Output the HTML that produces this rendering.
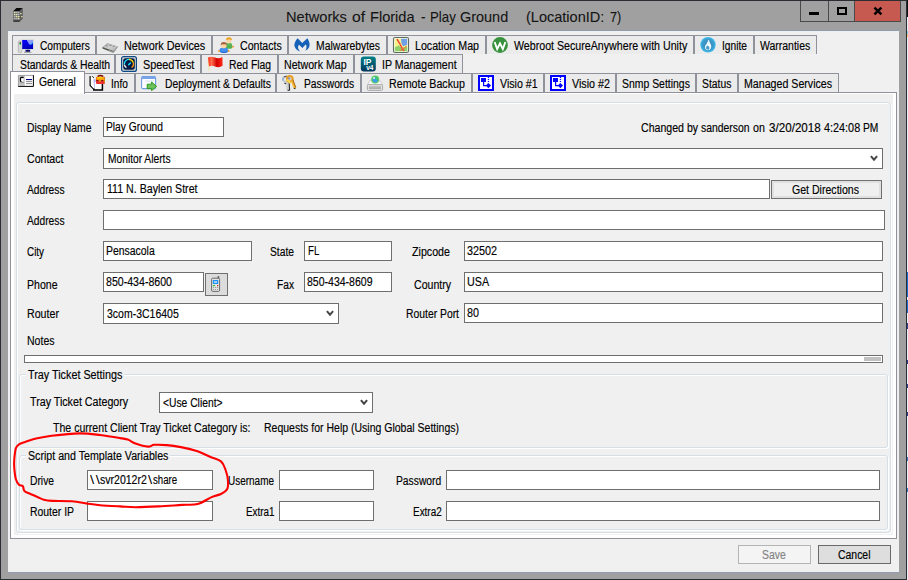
<!DOCTYPE html>
<html lang="en">
<head>
<meta charset="utf-8">
<title>Networks of Florida - Play Ground (LocationID: 7)</title>
<style>
*{box-sizing:border-box;margin:0;padding:0}
html,body{width:908px;height:580px;overflow:hidden}
body{position:relative;background:#a0a0a0;font-family:"Liberation Sans",sans-serif;font-size:12px;color:#000}
.a,.t,.lb,.tab,.in,.gb,.btn,svg.ic{position:absolute;display:block}
.t{white-space:pre;transform-origin:0 50%;color:#000;z-index:5;-webkit-text-stroke:0.15px currentColor}
.lb{z-index:4}
#content{left:8px;top:31px;width:891px;height:541px;background:#f0f0f0}
.tab{height:19px;background:#ebebeb;border:1px solid #8f919b;border-bottom:0;z-index:1}
.tab.r2,.tab.r3{}
.tab.sel{background:#fff;z-index:3;border-color:#8f919b}
#panel{left:10px;top:92px;width:887px;height:447px;border:1px solid #8f919b;background:#fff;z-index:2}
#page{left:14px;top:94px;width:879px;height:441px;background:#f0f0f0;z-index:3}
.gb{border:1px solid #d5dfe5;border-radius:3px;box-shadow:inset 1px 1px 0 #fff, 1px 1px 0 #fff;z-index:3}
.in{background:#fff;border:1px solid #6f6f6f;z-index:4}
.btn{z-index:4;border:1px solid #707070;background:#e1e1e1}
svg.ic{z-index:5;overflow:visible}
</style>
</head>
<body>
<!-- window frame -->
<div class="a" style="left:0;top:0;width:908px;height:1px;background:#2b2d33"></div>
<div class="a" style="left:0;top:0;width:1px;height:580px;background:#2b2d33"></div>
<div class="a" style="left:906px;top:0;width:1px;height:580px;background:#2b2d33"></div>
<div class="a" style="left:907px;top:0;width:1px;height:580px;background:#e8eef5"></div>
<div class="a" style="left:0;top:579px;width:907px;height:1px;background:#2b2d33"></div>
<!-- caption buttons -->
<div class="a" style="left:800px;top:1px;width:101px;height:21px;background:#4a4a4a"></div>
<div class="a" style="left:801px;top:1px;width:27px;height:20px;background:#a0a0a0"></div>
<div class="a" style="left:829px;top:1px;width:25px;height:20px;background:#a0a0a0"></div>
<div class="a" style="left:855px;top:1px;width:45px;height:20px;background:#c75a50"></div>
<div class="a" style="left:809px;top:12px;width:10px;height:3px;background:#000"></div>
<div class="a" style="left:837px;top:7px;width:10px;height:8px;border:2px solid #000"></div>
<svg class="ic" style="left:873px;top:7px" width="10" height="8" viewBox="0 0 10 8"><path d="M1.4 0.6 L8.4 7.4 M8.4 0.6 L1.4 7.4" stroke="#000" stroke-width="2.5" fill="none"/></svg>
<div class="a" style="left:907px;top:0;width:1px;height:17px;background:#111"></div>
<div class="a" style="left:907px;top:31px;width:1px;height:3px;background:#7fd6e8"></div>
<div class="a" style="left:907px;top:34px;width:1px;height:3px;background:#f0c070"></div>
<div class="a" style="left:8px;top:30px;width:891px;height:1px;background:#8f9dae"></div>
<div class="a" style="left:8px;top:572px;width:891px;height:1px;background:#8f9dae"></div>
<div class="a" style="left:907px;top:272px;width:1px;height:25px;background:#1b6fd2"></div>
<div class="a" style="left:907px;top:300px;width:1px;height:13px;background:#1b6fd2"></div>
<div class="a" style="left:907px;top:323px;width:1px;height:6px;background:#27408a"></div>
<div class="a" style="left:907px;top:360px;width:1px;height:4px;background:#27408a"></div>
<div class="a" style="left:907px;top:384px;width:1px;height:4px;background:#27408a"></div>
<div class="a" style="left:907px;top:412px;width:1px;height:4px;background:#27408a"></div>
<div class="a" style="left:907px;top:457px;width:1px;height:4px;background:#3a78c8"></div>
<div class="a" style="left:907px;top:488px;width:1px;height:4px;background:#3a78c8"></div>
<div class="a" id="content"></div>
<!-- tabs row 1 -->
<div class="tab" style="left:12px;top:35px;width:84px"></div>
<div class="tab" style="left:96px;top:35px;width:116px"></div>
<div class="tab" style="left:212px;top:35px;width:76px"></div>
<div class="tab" style="left:288px;top:35px;width:99px"></div>
<div class="tab" style="left:387px;top:35px;width:99px"></div>
<div class="tab" style="left:486px;top:35px;width:208px"></div>
<div class="tab" style="left:694px;top:35px;width:60px"></div>
<div class="tab" style="left:754px;top:35px;width:63px"></div>
<!-- tabs row 2 -->
<div class="tab r2" style="left:12px;top:54px;width:103px"></div>
<div class="tab r2" style="left:115px;top:54px;width:86px"></div>
<div class="tab r2" style="left:201px;top:54px;width:77px"></div>
<div class="tab r2" style="left:278px;top:54px;width:76px"></div>
<div class="tab r2" style="left:354px;top:54px;width:109px"></div>
<!-- tabs row 3 -->
<div class="tab r3" style="left:83px;top:73px;width:52px"></div>
<div class="tab r3" style="left:135px;top:73px;width:141px"></div>
<div class="tab r3" style="left:276px;top:73px;width:85px"></div>
<div class="tab r3" style="left:361px;top:73px;width:111px"></div>
<div class="tab r3" style="left:472px;top:73px;width:72px"></div>
<div class="tab r3" style="left:544px;top:73px;width:72px"></div>
<div class="tab r3" style="left:616px;top:73px;width:80px"></div>
<div class="tab r3" style="left:696px;top:73px;width:42px"></div>
<div class="tab r3" style="left:738px;top:73px;width:101px"></div>
<div class="a" id="panel"></div>
<div class="tab sel" style="left:10px;top:71px;width:75px;height:23px"></div>
<div class="a" id="page"></div>
<!-- group boxes -->
<div class="gb" style="left:16px;top:102px;width:875px;height:431px"></div>
<div class="gb" style="left:19px;top:374px;width:869px;height:74px"></div>
<div class="gb" style="left:19px;top:455px;width:869px;height:75px"></div>
<!-- inputs -->
<div class="in" style="left:103px;top:117px;width:121px;height:20px"></div>
<div class="in" style="left:103px;top:148px;width:780px;height:21px"></div>
<div class="in" style="left:103px;top:179px;width:667px;height:20px"></div>
<div class="btn" style="left:771px;top:180px;width:111px;height:19px;background:#efefef;box-shadow:inset 0 0 0 2px #e0e0e0"></div>
<div class="in" style="left:103px;top:210px;width:782px;height:20px"></div>
<div class="in" style="left:103px;top:241px;width:149px;height:20px"></div>
<div class="in" style="left:304px;top:241px;width:88px;height:20px"></div>
<div class="in" style="left:464px;top:241px;width:419px;height:20px"></div>
<div class="in" style="left:103px;top:272px;width:101px;height:20px"></div>
<div class="btn" style="left:205px;top:273px;width:23px;height:23px;background:#dcdcdc"></div>
<div class="in" style="left:304px;top:272px;width:88px;height:20px"></div>
<div class="in" style="left:464px;top:272px;width:419px;height:20px"></div>
<div class="in" style="left:103px;top:303px;width:236px;height:21px"></div>
<div class="in" style="left:464px;top:303px;width:419px;height:20px"></div>
<div class="in" style="left:24px;top:355px;width:859px;height:8px"></div>
<div class="a" style="left:864px;top:357px;width:17px;height:4px;background:#c1c1c1;z-index:5"></div>
<div class="in" style="left:159px;top:392px;width:214px;height:21px"></div>
<div class="in" style="left:87px;top:470px;width:126px;height:20px"></div>
<div class="in" style="left:279px;top:470px;width:95px;height:20px"></div>
<div class="in" style="left:446px;top:470px;width:434px;height:20px"></div>
<div class="in" style="left:87px;top:501px;width:126px;height:20px"></div>
<div class="in" style="left:279px;top:501px;width:95px;height:20px"></div>
<div class="in" style="left:446px;top:501px;width:434px;height:20px"></div>
<!-- combo arrows -->
<svg class="ic" style="left:870.2px;top:155.4px" width="8" height="7" viewBox="0 0 8 7"><path d="M0.9 1.2 L4 4.7 L7.1 1.2" stroke="#454545" stroke-width="2" fill="none"/></svg>
<svg class="ic" style="left:326.2px;top:310.4px" width="8" height="7" viewBox="0 0 8 7"><path d="M0.9 1.2 L4 4.7 L7.1 1.2" stroke="#454545" stroke-width="2" fill="none"/></svg>
<svg class="ic" style="left:360.2px;top:399.4px" width="8" height="7" viewBox="0 0 8 7"><path d="M0.9 1.2 L4 4.7 L7.1 1.2" stroke="#454545" stroke-width="2" fill="none"/></svg>
<!-- bottom buttons -->
<div class="btn" style="left:738px;top:545px;width:73px;height:19px;background:#f4f4f4;border-color:#b4b4b4"></div>
<div class="btn" style="left:818px;top:545px;width:73px;height:19px;background:#dedede;border-color:#6a6a6a"></div>
<svg class="ic" style="left:12px;top:7px" width="12" height="16" viewBox="0 0 12 16">
<polygon points="1.5,4 4.5,1 10.5,1 10.5,11.5 7.5,14.8 1.5,14.8" fill="#4a4a4a"/>
<polygon points="1.5,4 4.5,1 10.5,1 7.5,4" fill="#0b0b0b"/>
<polygon points="7.5,4 10.5,1 10.5,11.5 7.5,14.8" fill="#5e5e5e"/>
<rect x="1.5" y="4" width="6" height="10.8" fill="#777"/>
<g fill="#ffffb0"><rect x="2.2" y="5" width="1.2" height="1.2"/><rect x="2.2" y="7" width="1.2" height="1.2"/><rect x="4.2" y="7" width="1.2" height="1.2"/><rect x="4.2" y="9" width="1.2" height="1.2"/><rect x="6.2" y="9" width="1.2" height="1.2"/><rect x="6.2" y="11" width="1.2" height="1.2"/><rect x="8.3" y="6" width="1.2" height="1.2"/><rect x="9.3" y="9" width="1.2" height="1.2"/></g>
<g fill="#c8c8c8"><rect x="4.2" y="5" width="1.2" height="1.2"/><rect x="6.2" y="5" width="1.2" height="1.2"/><rect x="6.2" y="7" width="1.2" height="1.2"/><rect x="2.2" y="9" width="1.2" height="1.2"/><rect x="2.2" y="11" width="1.2" height="1.2"/><rect x="4.2" y="11" width="1.2" height="1.2"/></g>
<rect x="1.5" y="13.3" width="6" height="1.5" fill="#333"/>
</svg>
<svg class="ic" style="left:18px;top:37px" width="16" height="16" viewBox="0 0 16 16">
<defs><linearGradient id="gcm" x1="0" y1="0" x2="0" y2="1"><stop offset="0" stop-color="#0000ff"/><stop offset="1" stop-color="#0000b4"/></linearGradient></defs>
<rect x="0.3" y="3.8" width="3.4" height="11.8" rx="1" fill="#d9d9d9" stroke="#a9a9a9" stroke-width=".7"/>
<rect x="1.6" y="5.3" width="1.4" height="1.5" fill="#111"/><rect x="1.6" y="6.6" width="1.4" height="1.4" fill="#18e038"/>
<rect x="3.6" y="2.2" width="12" height="10.4" fill="#e8e8e8" stroke="#d0d4d8" stroke-width=".6"/>
<rect x="4.2" y="3" width="10.8" height="9" fill="url(#gcm)"/>
<polygon points="9,3 15,3 15,5.5 13,7.6 11.6,7.6 10.2,6 10.2,4.6 9,4.6" fill="#8f9cf6"/>
<polygon points="12,7.6 14.2,5.2 15,5.2 15,6 13,7.8" fill="#25b4f0"/>
<rect x="7.5" y="12.8" width="4.6" height="2" fill="#00008c"/><rect x="9.2" y="12.8" width="1.2" height="2" fill="#1a1a1a"/>
<rect x="6" y="14.8" width="7.4" height="1" fill="#9a9a9a"/>
</svg>
<svg class="ic" style="left:102px;top:37px" width="16" height="16" viewBox="0 0 16 16">
<defs><linearGradient id="gnd" x1="0" y1="0" x2="1" y2="1"><stop offset="0" stop-color="#a4a4a4"/><stop offset=".5" stop-color="#cfcfcf"/><stop offset="1" stop-color="#b0b0b0"/></linearGradient></defs>
<polygon points="0.4,10.4 5.4,6.2 15.8,9.6 12,15.2 10,15.6 0.6,11.4" fill="#8a8a8a"/>
<polygon points="0.6,10 5.4,6.2 15.6,9.4 11.4,14" fill="url(#gnd)"/>
<polygon points="0.6,10.2 11.4,14.2 11.4,15.4 0.6,11.4" fill="#55584f"/>
<polygon points="6.6,13 10.8,14.4 10.8,15.2 6.6,13.8" fill="#a9b8a4"/>
<polygon points="11.4,14.2 15.6,9.4 15.6,10.6 11.6,15.4" fill="#9a9a9a"/>
<rect x="4.4" y="7.8" width="1.6" height=".9" fill="#808080" transform="rotate(18 4 7)"/><rect x="8" y="7.6" width="2" height=".9" fill="#808080" transform="rotate(18 8 7)"/><rect x="11" y="8.6" width="2" height=".9" fill="#808080" transform="rotate(18 11 8)"/>
</svg>
<svg class="ic" style="left:218px;top:37px" width="16" height="16" viewBox="0 0 16 16">
<ellipse cx="10.6" cy="8.6" rx="3.6" ry="3.2" fill="#5cb85c"/><rect x="7.4" y="8" width="6.6" height="3.6" rx="1.2" fill="#55b055"/>
<circle cx="15" cy="9.8" r="1" fill="#f09a30"/>
<circle cx="10.8" cy="3.8" r="2.6" fill="#fbd5a5"/>
<path d="M7.8 3.6 Q8 0.2 10.9 0.3 Q13.9 0.3 14 3.6 Q12.6 2 10.9 2.6 Q9 2 7.8 3.6Z" fill="#eba21a"/>
<path d="M1.4 13 Q2 10.6 5.6 10.6 Q9.6 10.6 10.2 13 L10 15 Q6 16.6 1.8 15Z" fill="#3f8fee"/>
<path d="M2.4 14.2 Q6 15.8 9.6 14.2 L9.4 15.2 Q6 16.6 2.4 15.2Z" fill="#2560d8"/>
<circle cx="1" cy="14" r="1" fill="#f09a30"/><circle cx="10.6" cy="14" r="1" fill="#f09a30"/>
<circle cx="5.8" cy="8.4" r="2.8" fill="#fbd5a5"/>
<path d="M2.6 8.4 Q2.6 5 5.8 5 Q9 5 9 8.4 Q7.6 6.8 5.8 7.4 Q4 6.8 2.6 8.4Z" fill="#a8623a"/>
</svg>
<svg class="ic" style="left:294px;top:37px" width="16" height="16" viewBox="0 0 16 16">
<path d="M3.6 1.2 L8.2 6 L13.4 1.2 Q16.4 5.6 15.2 10 Q14.2 12.6 11.4 13.8 Q13 11.6 12.4 8.6 L11.6 7.6 L8.4 11 L5 7.8 Q3.6 9.2 4.2 11.4 Q4.8 13.2 6.4 14.4 Q2 13.6 0.6 9.6 Q-0.4 5.4 3.6 1.2Z" fill="#1560b8"/>
</svg>
<svg class="ic" style="left:393px;top:37px" width="16" height="16" viewBox="0 0 16 16">
<rect x="0.5" y="0.5" width="15" height="15" rx="1.6" fill="#fafff5" stroke="#5f6b5f" stroke-width="1.1"/>
<rect x="1.8" y="1.8" width="12.4" height="12.4" fill="#f6f28a"/>
<polygon points="8,1.8 14.2,1.8 14.2,8 10,9.2 8.4,6" fill="#6f9fe6"/>
<polygon points="1.8,10.2 5.6,8.6 9,11 14.2,9.6 14.2,14.2 1.8,14.2" fill="#8fd06a"/>
<path d="M4 2 L7 7 L9.6 12 L11 14" stroke="#f0483c" stroke-width="1.5" fill="none"/>
<path d="M7 13.6 L10 11.6 L13.6 9.4" stroke="#f07830" stroke-width="1.1" fill="none"/>
</svg>
<svg class="ic" style="left:492px;top:37px" width="16" height="16" viewBox="0 0 16 16">
<circle cx="8" cy="8" r="7.9" fill="#38913d"/>
<path d="M2.6 5 L5.2 12 L8 6.4 L10.8 12 L13.4 5" stroke="#fff" stroke-width="1.9" fill="none" stroke-linejoin="miter"/>
</svg>
<svg class="ic" style="left:700px;top:37px" width="16" height="16" viewBox="0 0 16 16">
<defs><radialGradient id="gig" cx=".5" cy=".5" r=".5"><stop offset="0" stop-color="#3a8cb8"/><stop offset=".7" stop-color="#3b98c8"/><stop offset="1" stop-color="#3cc0f0"/></radialGradient></defs>
<circle cx="8" cy="7.8" r="7.7" fill="url(#gig)"/>
<path d="M8.6 2.6 C9.8 4.4 9.4 5.6 10.2 6.6 C11.4 8 11.4 9.6 11 10.8 C10.4 12.6 9.2 13.3 8 13.3 C6.2 13.3 5 12 5 10.2 C5 8.4 6.2 7.4 6.9 6.2 C7.6 5 8 4 8.6 2.6Z" fill="#eefaff"/>
<path d="M7.3 8.4 C8.6 8.8 9.6 9.8 9.4 11.2 C9.2 12.3 8.5 12.7 7.8 12.7 C6.7 12.7 6 11.9 6 10.8 C6 9.7 6.7 9 7.3 8.4Z" fill="#4a9ccc"/>
</svg>
<svg class="ic" style="left:121px;top:56px" width="16" height="16" viewBox="0 0 16 16">
<rect x="0.6" y="0.6" width="14.8" height="14.8" rx="2" fill="#d4d6d2" stroke="#0c4884" stroke-width="1.2"/>
<rect x="2.2" y="2.2" width="11.6" height="11.6" rx="2.4" fill="#041a44"/>
<path d="M5.4 11.6 A4.6 4.6 0 0 1 3.4 8.6" stroke="#ffffff" stroke-width="1.3" fill="none"/>
<path d="M3.4 8.4 A4.6 4.6 0 0 1 8 3.4" stroke="#1fe0ff" stroke-width="1.3" fill="none"/>
<path d="M8 3.4 A4.6 4.6 0 0 1 12.2 6.4" stroke="#ffe000" stroke-width="1.3" fill="none"/>
<path d="M12.2 6.4 A4.6 4.6 0 0 1 10.6 11.6" stroke="#ff9a10" stroke-width="1.3" fill="none"/>
<path d="M7.6 8.8 L9.4 7" stroke="#10e8ff" stroke-width="1.3" stroke-linecap="round"/>
</svg>
<svg class="ic" style="left:207px;top:56px" width="16" height="16" viewBox="0 0 16 16">
<defs><linearGradient id="gfl" x1="0" y1="0" x2="1" y2="0"><stop offset="0" stop-color="#ff2a1a"/><stop offset=".25" stop-color="#ff7050"/><stop offset=".6" stop-color="#d40000"/><stop offset="1" stop-color="#ff2a1a"/></linearGradient></defs>
<path d="M0.6 1.4 L1.6 1.4 L2.6 15.6 L1.8 15.6Z" fill="#f0e2a0"/>
<path d="M1 1.6 Q4 -0.2 8 1.6 Q11.6 3 15.4 1 L15.6 9.8 Q12 12.2 8 10.4 Q4.6 8.8 2 10.6Z" fill="url(#gfl)"/>
</svg>
<svg class="ic" style="left:360px;top:56px" width="16" height="16" viewBox="0 0 16 16">
<defs><linearGradient id="gip" x1="0" y1="0" x2="0" y2="1"><stop offset="0" stop-color="#008289"/><stop offset="1" stop-color="#00345a"/></linearGradient></defs>
<rect x="0.8" y="0.6" width="15" height="15" rx="3" fill="url(#gip)"/>
<text x="3.4" y="8.6" font-family="Liberation Sans,sans-serif" font-weight="bold" font-size="8.4" fill="#fff">IP</text>
<text x="6.2" y="14" font-family="Liberation Sans,sans-serif" font-weight="bold" font-size="6.6" fill="#fff">v4</text>
</svg>
<svg class="ic" style="left:18px;top:73px" width="16" height="16" viewBox="0 0 16 16">
<rect x="0.4" y="2.2" width="15.2" height="11.4" fill="#fff"/>
<rect x="0.4" y="2.2" width="6.4" height="10.6" fill="#c4c4c4"/>
<path d="M0.4 13.4 L0.4 2.4 L15.6 2.4" stroke="#9a9a9a" stroke-width=".9" fill="none"/>
<path d="M0.2 13.4 L15.4 13.4 L15.4 2.2" stroke="#000" stroke-width="1" fill="none"/>
<path d="M5.6 4.4 L3.4 4.4 Q2.4 4.4 2.4 5.6 L2.4 7.4 Q2.4 8.6 3.6 8.8" stroke="#000" stroke-width="1.1" fill="none"/>
<rect x="3.4" y="5.4" width="2" height="3" fill="#fff"/>
<rect x="2.4" y="9.2" width="3.6" height="0.9" fill="#8a8a8a"/>
<rect x="8" y="6" width="6" height="1.1" fill="#00008a"/>
<rect x="8" y="8.2" width="6" height=".9" fill="#7d7d7d"/>
<rect x="8" y="10.2" width="6" height=".9" fill="#7d7d7d"/>
</svg>
<svg class="ic" style="left:89px;top:75px" width="16" height="16" viewBox="0 0 16 16">
<path d="M1.1 1 L1.1 10.4 L5 14.4" stroke="#000" stroke-width="1.15" fill="none"/>
<path d="M3.4 1.4 L4.8 2.8" stroke="#000" stroke-width="1" fill="none"/>
<polygon points="2.2,1.6 5,4.6 5,14 2.2,10.4" fill="#fff"/>
<polygon points="4.4,4.2 6.6,4.2 6.6,13.6 5.2,13.6" fill="#b4b4f0"/>
<rect x="5.8" y="7" width="7.2" height="7.6" fill="#fff"/>
<path d="M4.8 13.4 L4.8 15 L13.4 15 L13.4 8.4" stroke="#000" stroke-width="1.5" fill="none"/>
<rect x="7" y="1.8" width="9" height="7.2" rx="1" fill="#ee3030"/>
<rect x="7.4" y="2" width="7.6" height="3.6" fill="#ff9a10"/>
<rect x="8" y="2" width="5.4" height="1.6" fill="#ffd000"/>
<path d="M8.6 1.4 Q11.4 -0.4 14.2 1.4" stroke="#7a0c04" stroke-width="1.5" fill="none"/>
<rect x="15" y="2.4" width="1" height="5.4" fill="#d08a18"/>
<rect x="7.4" y="5.2" width="2" height=".9" fill="#400"/><rect x="12.2" y="5.2" width="2" height=".9" fill="#400"/>
<rect x="10.2" y="5.2" width="1.4" height="1.8" fill="#e8a020"/>
</svg>
<svg class="ic" style="left:141px;top:75px" width="16" height="16" viewBox="0 0 16 16">
<rect x="0.6" y="1.6" width="14" height="12" rx="1.4" fill="#fdfdff" stroke="#6f9be0" stroke-width="1.1"/>
<rect x="0.6" y="1.6" width="14" height="2.4" rx="1" fill="#78a4e8"/>
<rect x="4" y="5.2" width="8.4" height="2" fill="#e4ecfa"/>
<polygon points="6.2,9.2 10.6,9.2 10.6,7 15.6,11.4 10.6,15.6 10.6,13.6 6.2,13.6" fill="#6fbf5a" stroke="#2f9a22" stroke-width="1"/>
</svg>
<svg class="ic" style="left:282px;top:75px" width="16" height="16" viewBox="0 0 16 16">
<circle cx="3.8" cy="4.2" r="2.7" fill="none" stroke="#c4c8cc" stroke-width="1.9"/>
<path d="M1.8 2 Q4.6 0.6 6.8 2.2" stroke="#4a4a4a" stroke-width="1" fill="none"/>
<path d="M1.2 2.8 Q0.4 4 1 5.4" stroke="#7aa8d8" stroke-width="1.2" fill="none"/>
<polygon points="4.4,7.2 7,7.2 7.6,15 5.6,15.4 4.2,14.4" fill="#d0d0d0"/>
<path d="M7.2 8 L7.6 15 L5.6 15.4" stroke="#2a2a2a" stroke-width="1.1" fill="none"/>
<path d="M2.4 8.2 L4.2 8.8" stroke="#333" stroke-width="1.1"/>
<circle cx="7.8" cy="3.8" r="2.8" fill="none" stroke="#e8a028" stroke-width="2.2"/>
<circle cx="7.4" cy="3.4" r="1.2" fill="#8a98b8"/>
<path d="M4.4 4.6 L7 6.2 L8.2 8.4" stroke="#ffd84a" stroke-width="1.7" fill="none"/>
<polygon points="8.6,5.6 11,4.6 14,12.6 13.4,13.8 11.6,13" fill="#eaa42c"/>
<path d="M9.4 6 L12.2 12.6" stroke="#f8c848" stroke-width=".9" fill="none"/>
<path d="M10.8 4.6 L13.8 12.4" stroke="#b06c10" stroke-width="1" fill="none"/>
<path d="M11.8 13.2 L13.4 13.8" stroke="#333" stroke-width="1.2"/>
</svg>
<svg class="ic" style="left:367px;top:75px" width="16" height="16" viewBox="0 0 16 16">
<defs><linearGradient id="grb" x1="0" y1="0" x2="0" y2="1"><stop offset="0" stop-color="#c6c6c6"/><stop offset="1" stop-color="#a8a8a8"/></linearGradient></defs>
<polygon points="2.8,5.6 13.2,5.6 15.6,10 0.4,10" fill="#f6f6f6" stroke="#c4c4c4" stroke-width=".8"/>
<rect x="0.4" y="9.6" width="15.2" height="5.8" rx="1.2" fill="#ececec" stroke="#9a9a9a" stroke-width=".8"/>
<rect x="1.8" y="10.6" width="12.4" height="3.6" fill="url(#grb)"/>
<circle cx="8.2" cy="4.4" r="4" fill="#5ad05a"/>
<circle cx="8.2" cy="4.6" r="2.8" fill="#3f9cf0"/>
<path d="M8.6 2 Q11.4 2.4 10.6 5 L9 4.6 L8.4 3.4Z" fill="#38d060"/>
<circle cx="7" cy="3" r="1.1" fill="#d8f4d0"/>
</svg>
<svg class="ic" style="left:478px;top:75px" width="16" height="16" viewBox="0 0 16 16">
<rect x="0" y="0" width="16" height="16" fill="#0000ff"/>
<rect x="2" y="2" width="12" height="12" fill="#fff"/>
<rect x="3" y="3" width="5" height="4" fill="#0000ff"/>
<path d="M5.6 7 L5.6 10.6 L10 10.6" stroke="#0000ff" stroke-width="1.2" fill="none"/>
<polygon points="10.4,8 13,10.6 10.4,13.2 7.9,10.6" fill="#0000ff"/>
<rect x="9.8" y="2" width="1.3" height="1.1" fill="#0000ff"/><rect x="9.8" y="4" width="1.3" height="1.1" fill="#0000ff"/><rect x="9.8" y="6" width="1.3" height="1.1" fill="#0000ff"/>
</svg>
<svg class="ic" style="left:550px;top:75px" width="16" height="16" viewBox="0 0 16 16">
<rect x="0" y="0" width="16" height="16" fill="#0000ff"/>
<rect x="2" y="2" width="12" height="12" fill="#fff"/>
<rect x="3" y="3" width="5" height="4" fill="#0000ff"/>
<path d="M5.6 7 L5.6 10.6 L10 10.6" stroke="#0000ff" stroke-width="1.2" fill="none"/>
<polygon points="10.4,8 13,10.6 10.4,13.2 7.9,10.6" fill="#0000ff"/>
<rect x="9.8" y="2" width="1.3" height="1.1" fill="#0000ff"/><rect x="9.8" y="4" width="1.3" height="1.1" fill="#0000ff"/><rect x="9.8" y="6" width="1.3" height="1.1" fill="#0000ff"/>
</svg>
<svg class="ic" style="left:211px;top:276px" width="10" height="16" viewBox="0 0 10 16">
<rect x="6.6" y="0.2" width="1.6" height="4" fill="#555"/>
<rect x="0.6" y="2.2" width="8" height="13.2" rx="1.2" fill="#e4e4e4" stroke="#6a6a6a" stroke-width="1"/>
<rect x="1.8" y="4" width="5.4" height="4" rx=".6" fill="#1e90ff"/>
<rect x="3" y="5.2" width="3" height="1.6" fill="#bfe2ff"/>
<rect x="1.8" y="9" width="2.4" height="1.2" fill="#40c040"/><rect x="6" y="9" width="1.3" height="1.2" fill="#e03030"/>
<g fill="#9a9a9a"><rect x="2" y="11" width="1.1" height="1"/><rect x="4" y="11" width="1.1" height="1"/><rect x="6" y="11" width="1.1" height="1"/><rect x="2" y="13" width="1.1" height="1"/><rect x="4" y="13" width="1.1" height="1"/><rect x="6" y="13" width="1.1" height="1"/></g>
</svg>
<div class="g"><span class="t" style="left:285.60px;top:6.50px;font-size:15px;line-height:19px;transform:scaleX(0.9742);color:#141414;-webkit-text-stroke:0.1px currentColor">Networks </span><span class="t" style="left:351.80px;top:6.50px;font-size:15px;line-height:19px;transform:scaleX(1.0467);color:#141414;-webkit-text-stroke:0.1px currentColor">of </span><span class="t" style="left:369.70px;top:6.50px;font-size:15px;line-height:19px;transform:scaleX(0.9725);color:#141414;-webkit-text-stroke:0.1px currentColor">Florida </span><span class="t" style="left:421.30px;top:6.50px;font-size:15px;line-height:19px;transform:scaleX(0.9000);color:#141414;-webkit-text-stroke:0.1px currentColor">- </span><span class="t" style="left:429.80px;top:6.50px;font-size:15px;line-height:19px;transform:scaleX(0.8839);color:#141414;-webkit-text-stroke:0.1px currentColor">Play </span><span class="t" style="left:460.30px;top:6.50px;font-size:15px;line-height:19px;transform:scaleX(0.9631);color:#141414;-webkit-text-stroke:0.1px currentColor">Ground    </span><span class="t" style="left:526.30px;top:6.50px;font-size:15px;line-height:19px;transform:scaleX(0.9682);color:#141414;-webkit-text-stroke:0.1px currentColor">(LocationID: </span><span class="t" style="left:609.60px;top:6.50px;font-size:15px;line-height:19px;transform:scaleX(0.8468);color:#141414;-webkit-text-stroke:0.1px currentColor">7)</span></div>
<span class="t" style="left:39.50px;top:38.00px;font-size:12px;line-height:16px;transform:scaleX(0.8477)">Computers</span>
<span class="t" style="left:124.25px;top:38.00px;font-size:12px;line-height:16px;transform:scaleX(0.9025)">Network Devices</span>
<span class="t" style="left:239.50px;top:38.00px;font-size:12px;line-height:16px;transform:scaleX(0.8816)">Contacts</span>
<span class="t" style="left:316.25px;top:38.00px;font-size:12px;line-height:16px;transform:scaleX(0.8645)">Malwarebytes</span>
<span class="t" style="left:415.00px;top:38.00px;font-size:12px;line-height:16px;transform:scaleX(0.8883)">Location Map</span>
<span class="t" style="left:514.00px;top:38.00px;font-size:12px;line-height:16px;transform:scaleX(0.8875)">Webroot SecureAnywhere with Unity</span>
<span class="t" style="left:722.25px;top:38.00px;font-size:12px;line-height:16px;transform:scaleX(0.8515)">Ignite</span>
<span class="t" style="left:760.25px;top:38.00px;font-size:12px;line-height:16px;transform:scaleX(0.8727)">Warranties</span>
<span class="t" style="left:19.80px;top:56.50px;font-size:12px;line-height:16px;transform:scaleX(0.8658)">Standards &amp; Health</span>
<span class="t" style="left:142.80px;top:56.50px;font-size:12px;line-height:16px;transform:scaleX(0.9053)">SpeedTest</span>
<span class="t" style="left:229.30px;top:56.50px;font-size:12px;line-height:16px;transform:scaleX(0.8644)">Red Flag</span>
<span class="t" style="left:284.30px;top:56.50px;font-size:12px;line-height:16px;transform:scaleX(0.8856)">Network Map</span>
<span class="t" style="left:381.80px;top:56.50px;font-size:12px;line-height:16px;transform:scaleX(0.8828)">IP Management</span>
<span class="t" style="left:39.30px;top:73.50px;font-size:12px;line-height:16px;transform:scaleX(0.8629)">General</span>
<span class="t" style="left:111.05px;top:75.50px;font-size:12px;line-height:16px;transform:scaleX(0.8418)">Info</span>
<span class="t" style="left:165.30px;top:75.50px;font-size:12px;line-height:16px;transform:scaleX(0.8624)">Deployment &amp; Defaults</span>
<span class="t" style="left:304.30px;top:75.50px;font-size:12px;line-height:16px;transform:scaleX(0.8537)">Passwords</span>
<span class="t" style="left:389.30px;top:75.50px;font-size:12px;line-height:16px;transform:scaleX(0.8883)">Remote Backup</span>
<span class="t" style="left:499.55px;top:75.50px;font-size:12px;line-height:16px;transform:scaleX(0.8850)">Visio #1</span>
<span class="t" style="left:571.80px;top:75.50px;font-size:12px;line-height:16px;transform:scaleX(0.8909)">Visio #2</span>
<span class="t" style="left:621.80px;top:75.50px;font-size:12px;line-height:16px;transform:scaleX(0.8693)">Snmp Settings</span>
<span class="t" style="left:702.05px;top:75.50px;font-size:12px;line-height:16px;transform:scaleX(0.8624)">Status</span>
<span class="t" style="left:744.05px;top:75.50px;font-size:12px;line-height:16px;transform:scaleX(0.8864)">Managed Services</span>
<span class="t" style="left:27.00px;top:119.50px;font-size:12px;line-height:16px;transform:scaleX(0.8634)">Display Name</span>
<span class="t" style="left:26.50px;top:151.00px;font-size:12px;line-height:16px;transform:scaleX(0.8825)">Contact</span>
<span class="t" style="left:27.00px;top:182.00px;font-size:12px;line-height:16px;transform:scaleX(0.8517)">Address</span>
<span class="t" style="left:27.00px;top:213.00px;font-size:12px;line-height:16px;transform:scaleX(0.8517)">Address</span>
<span class="t" style="left:26.50px;top:244.00px;font-size:12px;line-height:16px;transform:scaleX(0.8224)">City</span>
<span class="t" style="left:27.00px;top:277.00px;font-size:12px;line-height:16px;transform:scaleX(0.8789)">Phone</span>
<span class="t" style="left:27.00px;top:306.00px;font-size:12px;line-height:16px;transform:scaleX(0.8881)">Router</span>
<span class="t" style="left:27.00px;top:333.00px;font-size:12px;line-height:16px;transform:scaleX(0.8769)">Notes</span>
<span class="t" style="left:270.00px;top:244.00px;font-size:12px;line-height:16px;transform:scaleX(0.8562)">State</span>
<span class="t" style="left:277.00px;top:277.00px;font-size:12px;line-height:16px;transform:scaleX(0.8493)">Fax</span>
<span class="t" style="left:412.00px;top:244.00px;font-size:12px;line-height:16px;transform:scaleX(0.8899)">Zipcode</span>
<span class="t" style="left:414.00px;top:277.00px;font-size:12px;line-height:16px;transform:scaleX(0.8803)">Country</span>
<span class="t" style="left:406.00px;top:306.00px;font-size:12px;line-height:16px;transform:scaleX(0.8638)">Router Port</span>
<div class="g"><span class="t" style="left:641.40px;top:119.50px;font-size:12px;line-height:16px;transform:scaleX(0.8806)">Changed </span><span class="t" style="left:687.30px;top:119.50px;font-size:12px;line-height:16px;transform:scaleX(0.8749)">by </span><span class="t" style="left:701.00px;top:119.50px;font-size:12px;line-height:16px;transform:scaleX(0.8671)">sanderson </span><span class="t" style="left:753.20px;top:119.50px;font-size:12px;line-height:16px;transform:scaleX(0.8908)">on </span><span class="t" style="left:768.80px;top:119.50px;font-size:12px;line-height:16px;transform:scaleX(0.9702)">3/20/2018 </span><span class="t" style="left:824.00px;top:119.50px;font-size:12px;line-height:16px;transform:scaleX(0.9039)">4:24:08 </span><span class="t" style="left:862.90px;top:119.50px;font-size:12px;line-height:16px;transform:scaleX(0.8556)">PM</span></div>
<span class="t" style="left:791.50px;top:181.50px;font-size:12px;line-height:16px;transform:scaleX(0.8812)">Get Directions</span>
<span class="t" style="left:106.25px;top:119.00px;font-size:12px;line-height:16px;transform:scaleX(0.8545)">Play Ground</span>
<span class="t" style="left:107.50px;top:151.00px;font-size:12px;line-height:16px;transform:scaleX(0.8520)">Monitor Alerts</span>
<span class="t" style="left:106.50px;top:181.00px;font-size:12px;line-height:16px;transform:scaleX(0.8848)">111 N. Baylen Stret</span>
<span class="t" style="left:106.25px;top:243.00px;font-size:12px;line-height:16px;transform:scaleX(0.8698)">Pensacola</span>
<span class="t" style="left:106.00px;top:274.00px;font-size:12px;line-height:16px;transform:scaleX(0.8831)">850-434-8600</span>
<span class="t" style="left:107.00px;top:306.00px;font-size:12px;line-height:16px;transform:scaleX(0.8743)">3com-3C16405</span>
<span class="t" style="left:307.50px;top:243.00px;font-size:12px;line-height:16px;transform:scaleX(0.8027)">FL</span>
<span class="t" style="left:307.00px;top:274.00px;font-size:12px;line-height:16px;transform:scaleX(0.8764)">850-434-8609</span>
<span class="t" style="left:466.60px;top:243.00px;font-size:12px;line-height:16px;transform:scaleX(0.9019)">32502</span>
<span class="t" style="left:466.60px;top:274.00px;font-size:12px;line-height:16px;transform:scaleX(0.8952)">USA</span>
<span class="t" style="left:466.60px;top:305.00px;font-size:12px;line-height:16px;transform:scaleX(0.8982)">80</span>
<i class="lb" style="left:25.9px;top:369.0px;width:98.4px;height:12px;background:#f0f0f0"></i><span class="t" style="left:27.90px;top:367.00px;font-size:12px;line-height:16px;transform:scaleX(0.8996)">Tray Ticket Settings</span>
<span class="t" style="left:29.90px;top:394.00px;font-size:12px;line-height:16px;transform:scaleX(0.8906)">Tray Ticket Category</span>
<span class="t" style="left:163.00px;top:395.00px;font-size:12px;line-height:16px;transform:scaleX(0.8577)">&lt;Use Client&gt;</span>
<span class="t" style="left:53.00px;top:419.50px;font-size:12px;line-height:16px;transform:scaleX(0.8813)">The current Client Tray Ticket Category is:</span>
<span class="t" style="left:263.80px;top:419.50px;font-size:12px;line-height:16px;transform:scaleX(0.8753)">Requests for Help (Using Global Settings)</span>
<i class="lb" style="left:25.9px;top:450.0px;width:144.4px;height:12px;background:#f0f0f0"></i><span class="t" style="left:27.90px;top:448.00px;font-size:12px;line-height:16px;transform:scaleX(0.8869)">Script and Template Variables</span>
<span class="t" style="left:30.00px;top:473.00px;font-size:12px;line-height:16px;transform:scaleX(0.8567)">Drive</span>
<div class="g"><span class="t" style="left:90.00px;top:472.00px;font-size:12px;line-height:16px;letter-spacing:1.33px;transform:scaleX(1.250);-webkit-text-stroke:0px currentColor">\\</span><span class="t" style="left:100.30px;top:472.00px;font-size:12px;line-height:16px;transform:scaleX(0.8768)">svr2012r2</span><span class="t" style="left:147.80px;top:472.00px;font-size:12px;line-height:16px;letter-spacing:0.00px;transform:scaleX(1.250);-webkit-text-stroke:0px currentColor">\</span><span class="t" style="left:153.20px;top:472.00px;font-size:12px;line-height:16px;transform:scaleX(0.8058)">share</span></div>
<span class="t" style="left:30.00px;top:503.50px;font-size:12px;line-height:16px;transform:scaleX(0.8678)">Router IP</span>
<span class="t" style="left:228.00px;top:473.00px;font-size:12px;line-height:16px;transform:scaleX(0.8309)">Username</span>
<span class="t" style="left:245.50px;top:503.50px;font-size:12px;line-height:16px;transform:scaleX(0.8216)">Extra1</span>
<span class="t" style="left:396.00px;top:473.00px;font-size:12px;line-height:16px;transform:scaleX(0.8588)">Password</span>
<span class="t" style="left:412.50px;top:503.50px;font-size:12px;line-height:16px;transform:scaleX(0.8288)">Extra2</span>
<span class="t" style="left:762.25px;top:547.00px;font-size:12px;line-height:16px;transform:scaleX(0.8681);color:#838383">Save</span>
<span class="t" style="left:837.75px;top:547.00px;font-size:12px;line-height:16px;transform:scaleX(0.8699)">Cancel</span>
<!-- red annotation -->
<svg class="ic" style="left:0;top:0;z-index:9" width="908" height="580" viewBox="0 0 908 580"><path d="M79.5 433.4C71.4 433.5 58.9 434.9 51.6 435.8C44.4 436.7 40.4 437.6 36.0 438.6C31.6 439.6 28.0 441.1 25.2 442.0C22.4 442.9 20.6 443.3 19.0 444.3C17.4 445.3 16.7 445.8 15.9 448.2C15.1 450.6 14.6 455.6 14.3 459.0C14.0 462.4 14.0 465.0 14.3 468.4C14.6 471.8 15.1 476.5 15.9 479.2C16.7 481.9 17.8 483.5 19.0 484.7C20.2 485.9 22.0 485.2 22.9 486.2C23.8 487.2 23.0 489.6 24.4 490.9C25.8 492.2 28.7 493.1 31.0 494.2C33.3 495.2 35.9 496.3 38.0 497.2C40.1 498.1 41.5 499.1 43.8 499.7C46.1 500.3 47.3 500.6 52.0 500.9C56.7 501.1 65.9 500.8 71.8 501.2C77.7 501.6 82.6 502.9 87.3 503.6C92.0 504.3 94.5 504.7 100.0 505.2C105.5 505.7 114.1 506.1 120.0 506.4C125.9 506.7 129.0 507.2 135.5 507.2C142.0 507.2 151.0 506.8 158.8 506.4C166.6 506.0 175.6 505.3 182.1 504.9C188.6 504.5 192.7 505.4 197.6 504.1C202.5 502.8 207.7 498.8 211.6 497.1C215.5 495.4 218.4 495.3 221.0 494.0C223.6 492.7 225.9 491.5 227.1 489.3C228.3 487.1 228.2 484.0 228.0 480.8C227.8 477.6 226.8 473.2 225.6 470.0C224.4 466.8 223.6 463.6 221.0 461.4C218.4 459.2 213.9 458.4 210.0 456.7C206.1 455.0 202.2 452.9 197.6 451.3C192.9 449.8 187.3 448.4 182.1 447.4C176.9 446.4 171.2 445.5 166.6 445.1C161.9 444.7 157.3 444.6 154.2 444.8C151.1 445.1 151.1 446.8 148.0 446.6C144.9 446.4 138.9 444.7 135.5 443.5C132.1 442.3 130.4 440.5 127.8 439.6C125.2 438.7 124.6 438.9 120.0 438.1C115.4 437.3 106.8 435.8 100.0 435.0C93.2 434.2 87.6 433.3 79.5 433.4Z" fill="none" stroke="#ff0000" stroke-width="2.1" stroke-linejoin="round"/></svg>
</body>
</html>
